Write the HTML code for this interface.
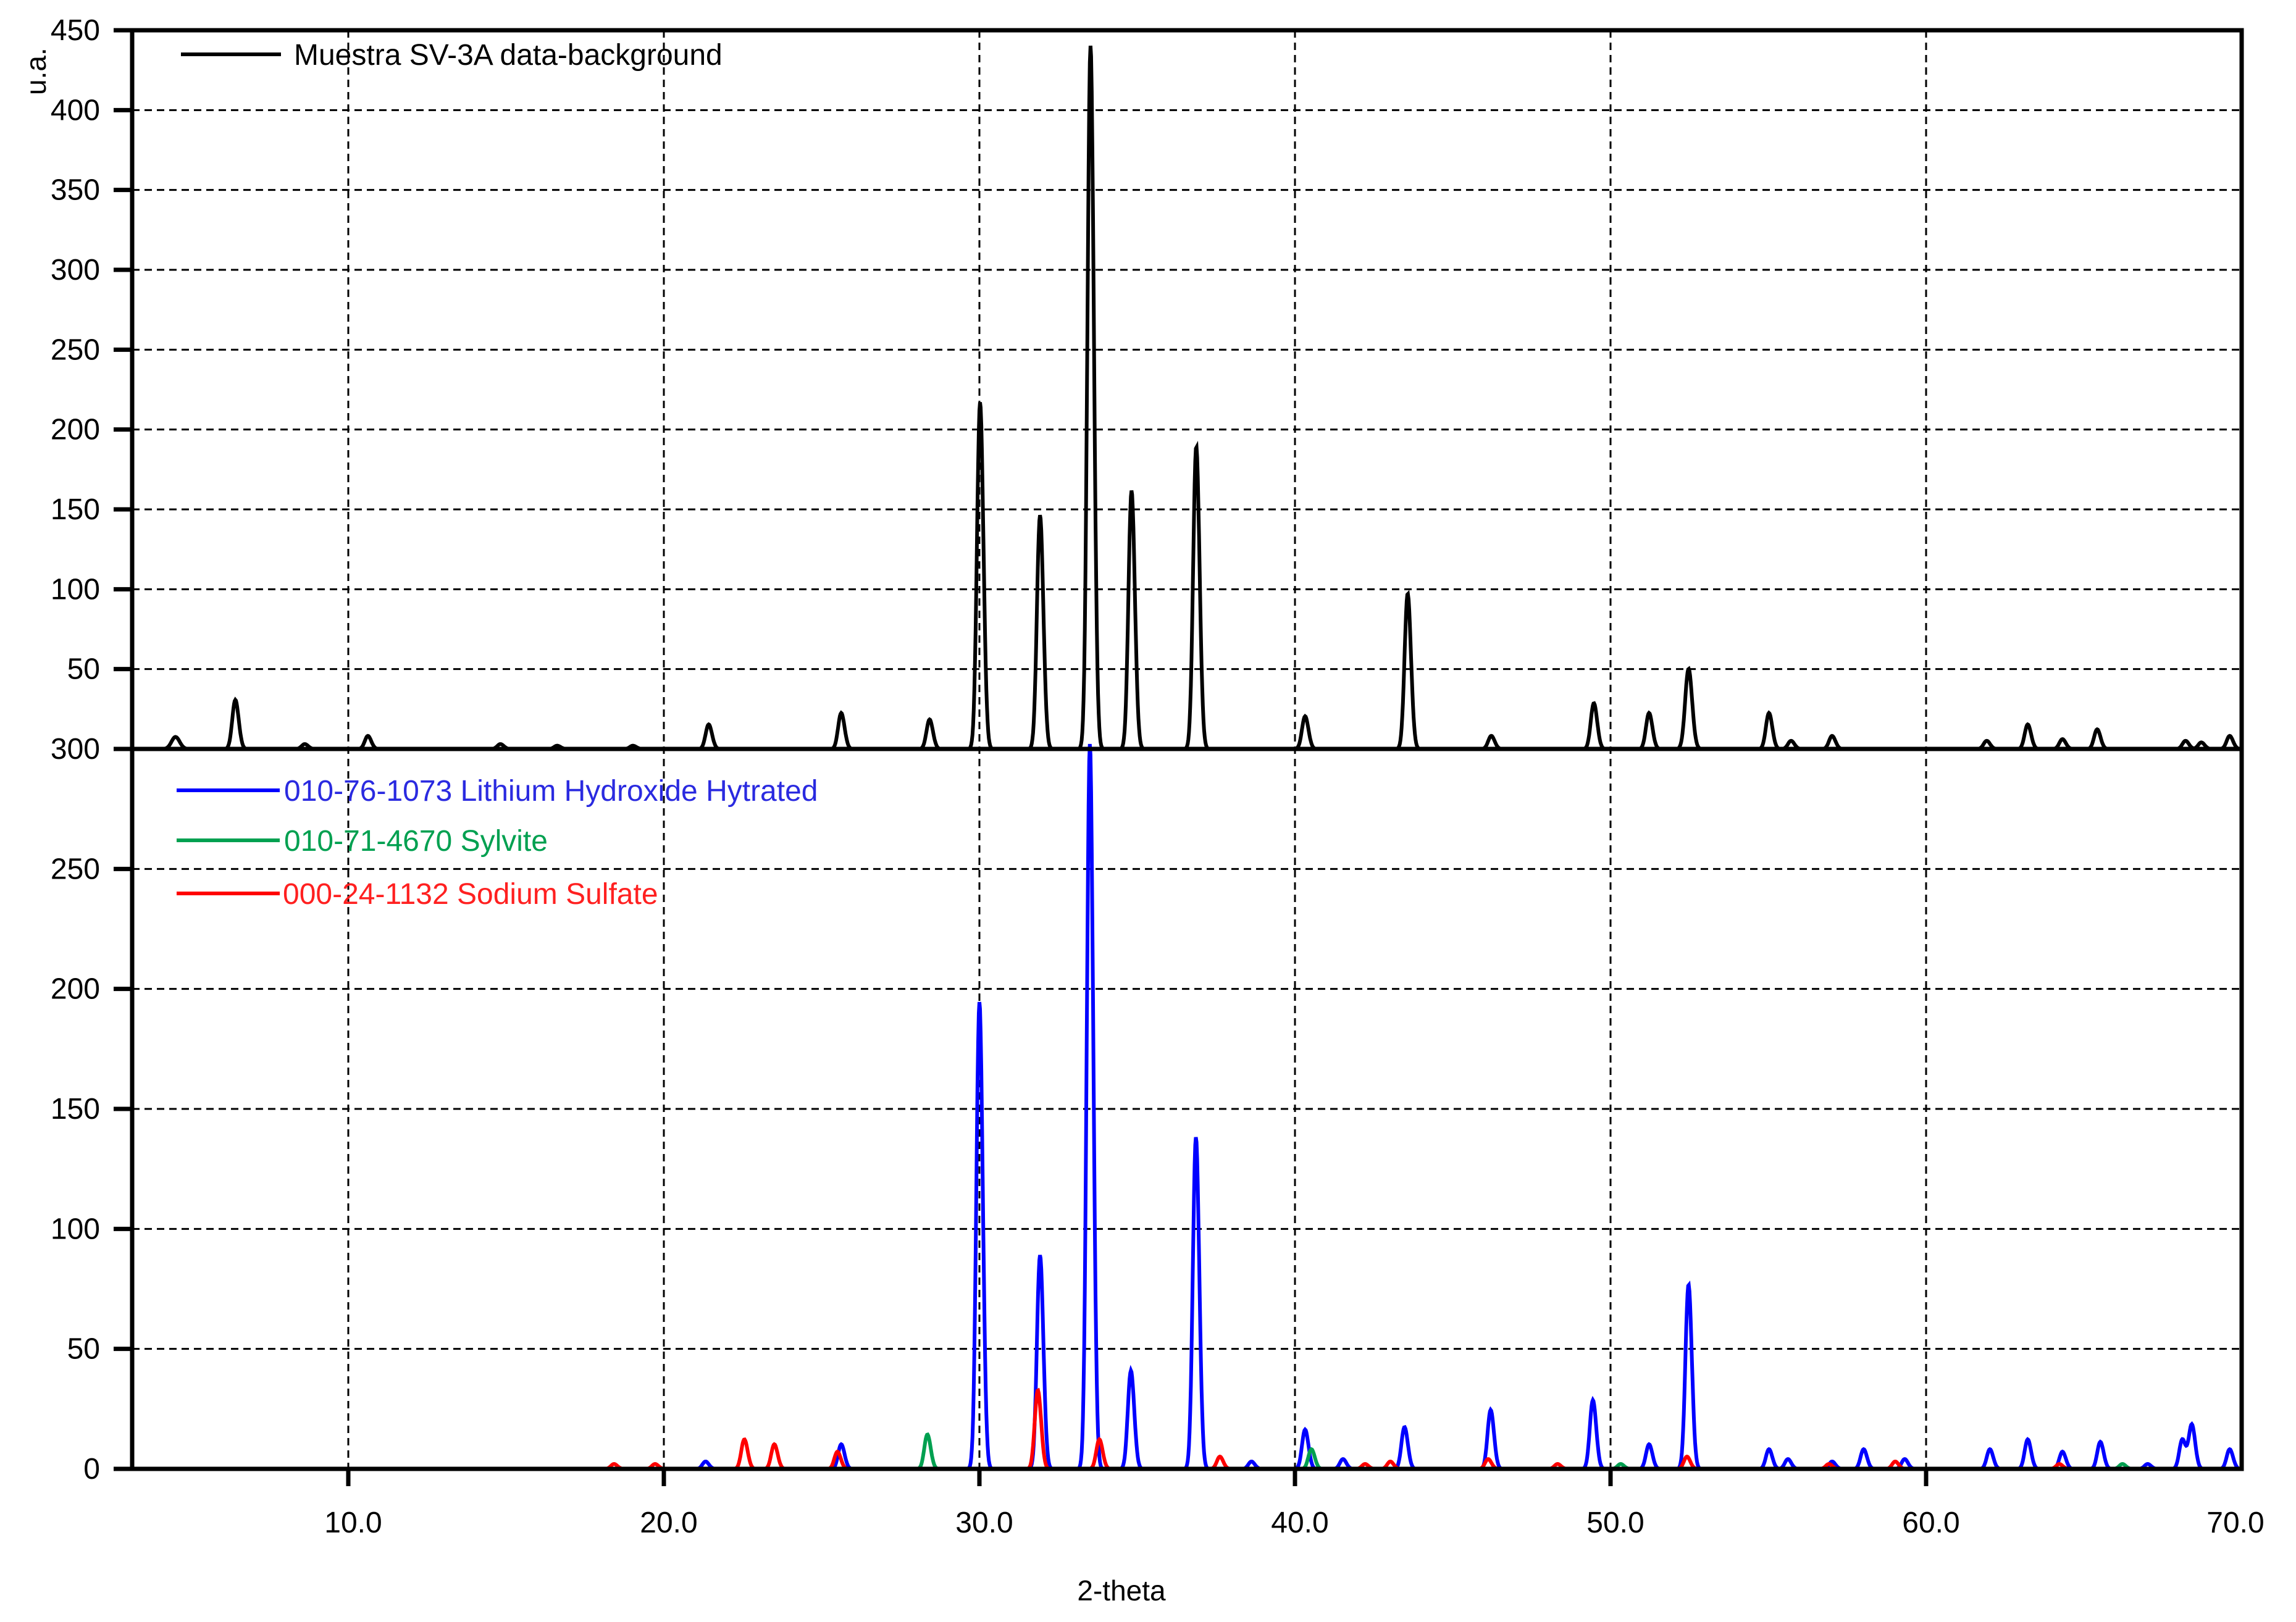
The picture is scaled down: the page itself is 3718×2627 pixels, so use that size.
<!DOCTYPE html>
<html><head><meta charset="utf-8"><style>
html,body{margin:0;padding:0;background:#fff;}
svg{display:block;}
text{font-family:"Liberation Sans",sans-serif;}
</style></head><body>
<svg id="s" xmlns="http://www.w3.org/2000/svg" width="3718" height="2627" viewBox="0 0 3718 2627">
<rect width="3718" height="2627" fill="#fff"/>
<g id="grid" stroke="#000" stroke-width="3" stroke-dasharray="12,8" fill="none"></g>
<g id="traces" fill="none" stroke-linejoin="miter" stroke-width="6"></g>
<g id="axes" stroke="#000" stroke-width="7" fill="none"></g>
<g id="labels" font-size="48" fill="#000"></g>
<text x="0" y="0" font-size="46" transform="translate(74,154) rotate(-90)">u.a.</text>
<text x="1816" y="2592" font-size="46" text-anchor="middle">2-theta</text>
<line x1="293" y1="88" x2="455" y2="88" stroke="#000" stroke-width="6"/>
<text x="476" y="105" font-size="48">Muestra SV-3A data-background</text>
<line x1="286" y1="1280" x2="453" y2="1280" stroke="#0000ff" stroke-width="6"/>
<text x="460" y="1297" font-size="48" fill="#2a2ae0">010-76-1073 Lithium Hydroxide Hytrated</text>
<line x1="286" y1="1361" x2="453" y2="1361" stroke="#00a050" stroke-width="6"/>
<text x="460" y="1378" font-size="48" fill="#00a050">010-71-4670 Sylvite</text>
<line x1="286" y1="1447" x2="453" y2="1447" stroke="#ff0000" stroke-width="6"/>
<text x="458" y="1464" font-size="48" fill="#ff2020">000-24-1132 Sodium Sulfate</text>
</svg>
<script>
var L=214,R=3630,T=49,M=1213,B=2379;
function X(t){return 564+(t-10)*51.1;}
var NS="http://www.w3.org/2000/svg";
function el(p,n,a){var e=document.createElementNS(NS,n);for(var k in a)e.setAttribute(k,a[k]);p.appendChild(e);return e;}
var g=document.getElementById('grid'),ax=document.getElementById('axes'),lb=document.getElementById('labels'),tr=document.getElementById('traces');
for(var v=50;v<=400;v+=50){var y=M-v*(M-T)/450;el(g,'line',{x1:L,y1:y,x2:R,y2:y});el(ax,'line',{x1:184,y1:y,x2:L,y2:y});var t=el(lb,'text',{x:162,y:y+16,'text-anchor':'end'});t.textContent=v;}
var t=el(lb,'text',{x:162,y:T+16,'text-anchor':'end'});t.textContent=450;el(ax,'line',{x1:184,y1:T,x2:L,y2:T});
t=el(lb,'text',{x:162,y:M+16,'text-anchor':'end'});t.textContent=300;el(ax,'line',{x1:184,y1:M,x2:L,y2:M});
for(var v=50;v<=250;v+=50){var y=B-v*(B-M)/300;el(g,'line',{x1:L,y1:y,x2:R,y2:y});el(ax,'line',{x1:184,y1:y,x2:L,y2:y});var t=el(lb,'text',{x:162,y:y+16,'text-anchor':'end'});t.textContent=v;}
t=el(lb,'text',{x:162,y:B+16,'text-anchor':'end'});t.textContent=0;el(ax,'line',{x1:184,y1:B,x2:L,y2:B});
for(var d=10;d<=60;d+=10){var x=X(d);el(g,'line',{x1:x,y1:T,x2:x,y2:B});el(ax,'line',{x1:x,y1:B,x2:x,y2:2407});var t=el(lb,'text',{x:x+8,y:2482,'text-anchor':'middle'});t.textContent=d.toFixed(1);}
t=el(lb,'text',{x:R-10,y:2482,'text-anchor':'middle'});t.textContent="70.0";
function trace(peaks,base,scale,color){
 var d="";for(var tt=3.2;tt<=69.9;tt+=0.02){var s=0;for(var i=0;i<peaks.length;i++){var p=peaks[i],w=p[2]||0.09;var h=p[1]/1.216;var z=(tt-p[0])/w;s+=h*Math.exp(-0.5*z*z);z=(tt-p[0]-0.1)/w;s+=h*0.4*Math.exp(-0.5*z*z);}
 var x=X(tt),y=base-s*scale;d+=(d?"L":"M")+x.toFixed(1)+","+y.toFixed(1);}
 el(tr,'path',{d:d,stroke:color});}
var black=[[4.5,7,.12],[6.4,30],[8.6,3],[10.6,8],[14.8,3],[16.6,2],[19,2],[21.4,15],[25.6,22],[28.4,18],[30.0,212],[31.9,143],[33.5,430],[34.8,158],[36.85,185],[40.3,20],[43.55,95],[46.2,8],[49.45,28],[51.2,22],[52.45,48,.1],[55.0,22],[55.7,5],[57.0,8],[61.9,5],[63.2,15],[64.3,6],[65.4,12],[68.2,5],[68.7,4],[69.6,8]];
var blue=[[21.3,3],[25.6,10],[29.98,190],[31.9,87],[33.48,295],[34.78,40],[36.84,135],[38.6,3],[40.3,16],[41.5,4],[43.45,17],[46.18,24],[49.42,28],[51.2,10],[52.45,75],[55.0,8],[55.6,4],[57.0,3],[58.0,8],[59.3,4],[62.0,8],[63.2,12],[64.3,7],[65.5,11],[67.0,2],[68.1,12],[68.4,18],[69.6,8]];
var green=[[28.33,14],[40.5,8],[50.3,2],[66.2,2]];
var red=[[18.4,2],[19.7,2],[22.53,12],[23.48,10],[25.48,7],[31.83,32],[33.78,12],[37.6,5],[42.2,2],[43,3],[46.1,4],[48.3,2],[52.4,5],[56.9,2],[59,3],[64.2,2]];
trace(black,M,(M-T)/450,"#000");
trace(blue,B,(B-M)/300,"#0000ff");
trace(green,B,(B-M)/300,"#00a050");
trace(red,B,(B-M)/300,"#ff0000");
el(ax,'rect',{x:L,y:T,width:R-L,height:B-T});
el(ax,'line',{x1:L,y1:M,x2:R,y2:M});
</script>
</body></html>
